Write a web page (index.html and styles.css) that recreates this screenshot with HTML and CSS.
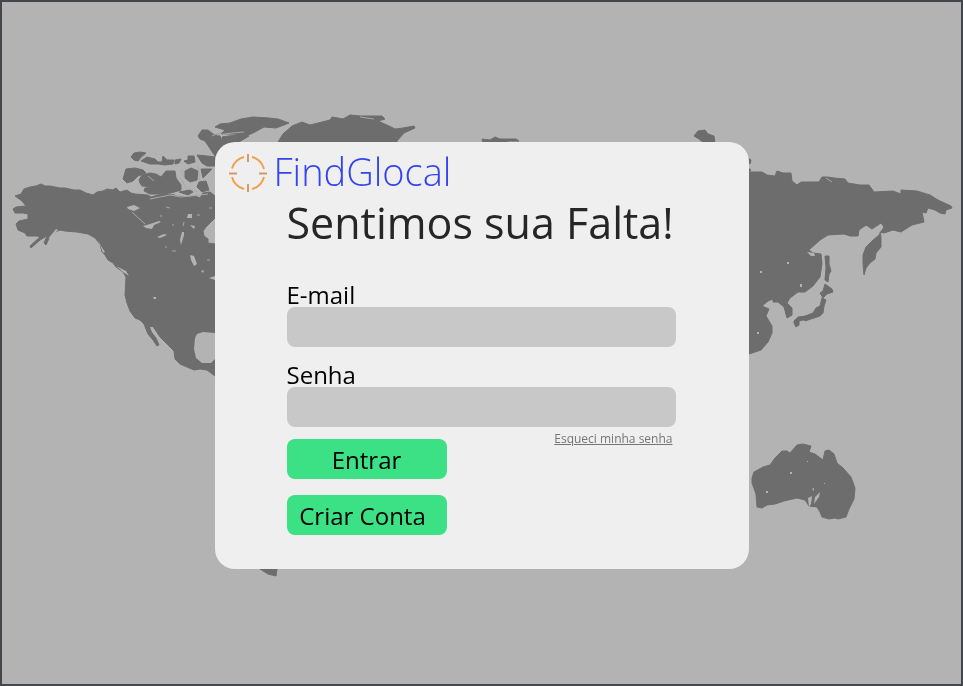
FILE: index.html
```html
<!DOCTYPE html>
<html lang="pt-BR">
<head>
<meta charset="utf-8">
<meta name="viewport" content="width=device-width, initial-scale=1">
<title>FindGlocal</title>
<link rel="stylesheet" href="styles.css">
</head>
<body>
<svg class="map" viewBox="0 0 963 686" preserveAspectRatio="xMidYMid slice" aria-hidden="true">
  <g class="land">
    <!-- North America -->
    <path d="M15 196L21 194 24 189 30 187 36 186 41 184 45 186 50 186 60 188 65 188 74 190 80 190 86 193 93 195 97 192 103 191 107 189 113 190 116 188 120 192 127 190 131 193 135 194 148 195 152 198 160 198 165 195 175 196 188 197 195 196 200 198 203 193 210 192 215 196H240V218H215L206 227 203 231 204 236 208 239 208 243 215 244H240V376H215L207 370 200 369 194 370 187 367 180 364 175 359 174 351 167 344 160 337 154 328 150 327 152 333 156 338 159 345 157 346 153 340 148 334 144 324 140 320 135 318 130 311 127 303 125 295 126 277 123 272 116 267 113 263 108 260 105 255 102 252 100 244 95 238 88 234 77 232 65 231 60 230 55 232 50 236 46 245 44 243 47 236 40 240 31 248 30 246 40 237 37 236 27 236 25 233 18 230 16 224 19 221 28 219 28 214 23 213 15 213 13 209 16 207 26 206 22 201Z"/>
    <!-- Canadian Arctic and Greenland -->
    <path d="M131 157L134 153 140 152 146 153 141 157 138 161 134 160ZM141 161L147 157 155 159 158 162 162 162 163 156 167 160 174 160 173 164 165 165 158 164 150 164ZM175 160L181 159 179 163 175 164ZM184 161L188 160 188 156 194 156 195 162 188 164ZM197 155L207 156 215 157V166H207L202 163Z"/>
    <path d="M123 179L126 169 135 168 143 170 146 173 138 176 133 181 127 183ZM139 180L142 175 150 173 156 174 161 177 166 171 175 171 176 178 181 185 181 190 171 193 160 194 150 194 144 191 145 188 154 187 142 186 140 183ZM185 171L191 168 198 171 197 180 190 182 185 178ZM201 169L212 169 207 174 203 178ZM199 182L206 181 209 190 202 192 197 187ZM179 192L190 190 193 192 188 195ZM151 197L162 194 175 195 171 199 158 200Z"/>
    <path d="M198 136L202 130 208 130 213 134 220 136 222 142H240V156H215L205 141 200 139ZM215 127L220 124 230 123 241 119 253 117 269 118 278 119 289 123 276 128 264 127 255 132 244 137 237 134 221 134 225 130ZM278 142L283 134 292 126 302 122 310 125 322 122 330 120 332 117 343 119 350 115 361 116 382 116 385 119 378 121 389 126 395 129 403 128 414 126 415 128 404 133 397 141V150H278ZM222 137L242 134 249 136 234 145 222 145ZM230 130L250 127 249 129 236 134Z"/>
    <!-- Arctic islands -->
    <path d="M482 139L490 140 495 137 500 139 516 139 519 141 509 141 500 143H483ZM694 136L698 131 705 130 708 134 714 136 715 143H704L699 139ZM748 158L751 160 750 164 748 163ZM748 168L751 170 748 173Z"/>
    <!-- Asia -->
    <path d="M740 173L749 172 762 172 767 175 775 176 777 171 783 173 791 173 792 181 797 185 801 182 819 182 822 177 828 177 834 178 845 179 848 183 860 185 869 185 874 192 893 191 901 194 901 190 917 191 930 195 938 200 951 206 952 208 946 210 945 214 940 213 935 210 928 208 926 213 922 212 924 222 912 225 901 232 893 230 884 233 880 232 881 237 881 247 876 253 875 259 870 263 866 268 864 275 863 264 863 255 866 247 872 241 879 235 884 227 881 223 872 229 866 225 859 230 858 236 850 236 844 234 828 235 820 240 809 250 813 253 821 254 822 264 820 277 813 286 805 292 798 292 790 298 787 303 792 308 792 315 787 318 784 307 778 302 773 302 773 299 768 301 762 306 769 309 766 316 772 326 772 333 768 342 761 350 749 354H740Z"/>
    <!-- Japan and Sakhalin -->
    <path d="M825 256L829 256 829 264 831 271 829 274 828 282 825 280 826 268ZM825 284L832 289 833 292 827 294 823 298 820 293 823 291ZM822 298L826 300 824 306 823 313 820 316 811 319 805 321 803 317 813 313 816 308 820 306ZM794 321L798 317 807 316 808 319 799 321 799 325 796 327 794 323Z"/>
    <!-- Australia -->
    <path d="M752 478L754 472 763 467 770 465 775 458 782 451 787 451 790 453 797 445 803 444 811 446 809 452 815 454 823 460 825 451 829 450 834 454 837 463 843 468 851 477 855 488 854 499 849 509 846 517 838 519 835 518 829 519 822 517 820 512 817 507 809 506 805 500 797 498 784 501 775 504 767 505 762 508 757 507 756 494 752 483Z"/>
    <path d="M260 569H277L276 576 268 574Z"/>
  </g>
  <g class="water">
    <path d="M197 334L203 332 215 333V359L211 363 202 363 196 358 194 349 195 338ZM127 207L134 205 140 208 134 211 128 209ZM143 226L150 224 159 221 161 222 154 225 152 229 146 228ZM157 237L164 234 167 235 160 238ZM190 255L194 256 197 264 194 266 191 260ZM182 232H184V235L181 245 180 240ZM188 214H192V218H187ZM190 225L195 226 194 229ZM209 278L215 276V280ZM153 297H156V299H154ZM201 271L204 270 203 273Z"/>
    <path d="M48 239L56 229 58 230 51 237ZM98 239L101 246 105 252 103 253ZM116 266L126 271 129 276 123 272ZM150 327L153 327 155 333 152 332ZM807 252L814 253 815 256 811 256ZM787 262H789V264H787ZM760 271H762V273H760ZM800 284H802V287H800ZM757 332H759V334H757Z"/>
    <path d="M812 489L814 488 814 491ZM808 498L812 496 811 504 809 507ZM815 497L820 492 819 497 814 504ZM790 472H792V474H790ZM766 491H768V493H766ZM807 461H808V462H807ZM824 483H825V484H824Z"/>
  </g>
  <path class="channels" d="M132 212L145 224M166 207L170 208M160 216H162M172 225H174M184 222L183 226M197 215H200M209 208H212M165 247H167M172 251H176M207 260H210M145 155L138 162M154 181L148 176M180 177L186 188 198 192M181 169L184 178M198 166L200 181M150 199L170 195 181 197 208 194M217 135L232 133 244 132M360 117L374 119M826 178L832 182M221 132L212 136"/>
</svg>
<main class="page">
  <section class="card">
    <header class="brand">
      <svg class="logo" viewBox="0 0 40 40" aria-hidden="true">
        <path d="M4 15.500A17 17 0 0 1 16 4M24 4A17 17 0 0 1 36 16M36 24A17 17 0 0 1 24 36M16 36A17 17 0 0 1 4 24"/>
        <path class="ticks" d="M20 1V9M20 31V39M1 20.500H9M31 20.500H39"/>
      </svg>
      <span class="name">FindGlocal</span>
    </header>
    <form class="form">
      <h1>Sentimos sua Falta!</h1>
      <label for="email">E-mail</label>
      <input id="email" type="email">
      <label for="senha">Senha</label>
      <input id="senha" type="password">
      <div class="actions">
        <div class="buttons">
          <button type="submit">Entrar</button>
          <button type="button" class="create">Criar Conta</button>
        </div>
        <a href="#">Esqueci minha senha</a>
      </div>
    </form>
  </section>
</main>
</body>
</html>
```
FILE: styles.css
```css
* {
  box-sizing: border-box;
}

body {
  margin: 0;
  background: #b3b3b3;
  color: #000;
  font-family: "Open Sans", "Noto Sans", sans-serif;
}

.map {
  position: fixed;
  inset: 0;
  width: 100%;
  height: 100%;
  z-index: -1;
}

.land {
  fill: #6d6d6d;
  stroke: #6d6d6d;
  stroke-width: 1;
  stroke-linejoin: round;
}

.water {
  fill: #b3b3b3;
}

.channels {
  fill: none;
  stroke: #a8a8a8;
  stroke-width: 1;
}

.page {
  display: flex;
  align-items: center;
  justify-content: center;
  min-height: 100vh;
  padding: 25px 0 0;
  border: 2px solid #43464a;
}

.card {
  width: 100%;
  max-width: 534px;
  padding: 11px 13px 34px;
  border-radius: 20px;
  background: #efefef;
}

.brand {
  display: flex;
  align-items: flex-start;
  gap: 6px;
}

.logo {
  width: 40px;
  height: 40px;
  fill: none;
  stroke: #f0a050;
  stroke-width: 2;
}

.ticks {
  stroke: #d99a62;
}

.name {
  color: #3344f0;
  font-size: 38px;
  font-weight: 300;
  line-height: 36px;
}

.form {
  padding: 0 60px 0 59px;
}

h1 {
  margin: 0 0 30px;
  color: #262626;
  font-size: 43px;
  font-weight: 400;
  line-height: 60px;
  white-space: nowrap;
}

label {
  display: block;
  font-size: 24px;
  line-height: 24px;
}

input {
  display: block;
  width: 100%;
  height: 40px;
  margin-bottom: 16px;
  padding: 0 12px;
  border: 0;
  border-radius: 8px;
  background: #c8c8c8;
  font: inherit;
  font-size: 20px;
}

.actions {
  display: flex;
  align-items: flex-start;
  justify-content: space-between;
  margin-top: -4px;
}

.buttons {
  display: flex;
  flex-direction: column;
  gap: 16px;
  width: 160px;
}

button {
  height: 40px;
  padding: 2px 0 0;
  border: 0;
  border-radius: 8px;
  background: #3be184;
  color: #000;
  font: inherit;
  font-size: 24px;
  line-height: 36px;
}

.create {
  padding: 2px 8px 0 0;
}

a {
  margin: -8px 3px 0 0;
  color: #757575;
  font-size: 12px;
  line-height: 16px;
}
```
